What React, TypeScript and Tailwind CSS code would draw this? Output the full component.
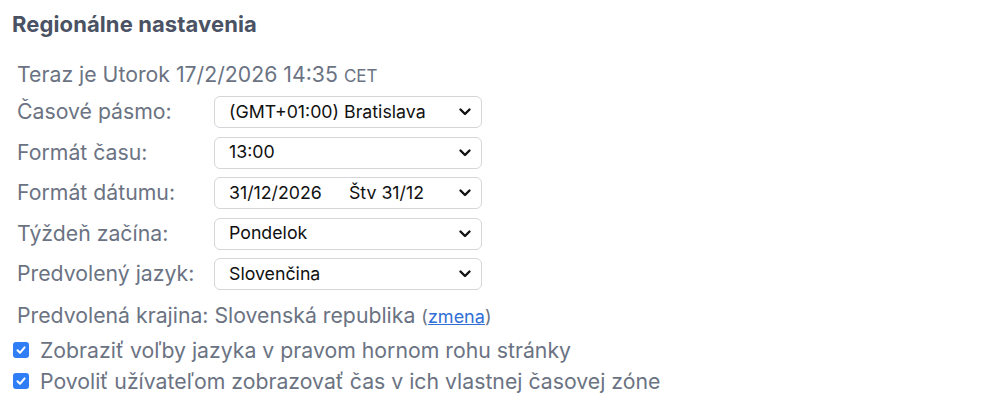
import React from 'react';

const rows = [
  { label: 'Časové pásmo:', value: '(GMT+01:00) Bratislava' },
  { label: 'Formát času:', value: '13:00' },
  { label: 'Formát dátumu:', value: '31/12/2026', extra: 'Štv 31/12' },
  { label: 'Týždeň začína:', value: 'Pondelok' },
  { label: 'Predvolený jazyk:', value: 'Slovenčina' },
];

function Chevron() {
  return (
    <svg className="h-[12px] w-[14px]" viewBox="0 0 14 12" fill="none">
      <path d="M2.5 3.5 7 8l4.5-4.5" stroke="#111" strokeWidth={2.4} strokeLinecap="round" strokeLinejoin="round" />
    </svg>
  );
}

function Check() {
  return (
    <span className="flex h-[16px] w-[16px] shrink-0 items-center justify-center rounded-[3px] bg-[#2f7ef6]">
      <svg className="h-[12px] w-[12px]" viewBox="0 0 12 12" fill="none">
        <path d="M2.5 6.3 5 8.8 9.6 3.4" stroke="white" strokeWidth={2} strokeLinecap="round" strokeLinejoin="round" />
      </svg>
    </span>
  );
}

export default function App() {
  return (
    <div className="h-[420px] w-[984px] bg-white pl-[12px] pt-[11px] font-['Inter',sans-serif] text-[#6b7383]">
      {/* Heading */}
      <h2 className="text-[22px] font-bold leading-[26px] tracking-[0.1px] text-[#4a5264]">Regionálne nastavenia</h2>

      <div className="mt-[25px] pl-[5px]">
        <div className="text-[21.25px] leading-[24px]">
          Teraz je Utorok 17/2/2026 14:35 <span className="text-[17px]">CET</span>
        </div>

        {/* Settings rows */}
        <div className="mt-[8px] flex flex-col gap-[8.5px]">
          {rows.map((r) => (
            <div key={r.label} className="flex h-[32px] items-center">
              <div className="w-[197px] text-[21.25px]">{r.label}</div>
              <div className="flex h-[32px] w-[268px] items-center justify-between rounded-[6px] border border-[#d4d6da] bg-white pl-[14px] pr-[9px] text-[17.75px] text-[#111]">
                <span className="flex gap-[27px]">
                  <span>{r.value}</span>
                  {r.extra && <span>{r.extra}</span>}
                </span>
                <Chevron />
              </div>
            </div>
          ))}
        </div>

        <div className="mt-[13px] text-[21.25px] leading-[24px]">
          Predvolená krajina: Slovenská republika{' '}
          <span className="text-[18px]">
            (<a href="#" className="text-[#2f6fd6] underline">zmena</a>)
          </span>
        </div>
      </div>

      {/* Checkboxes */}
      <div className="mt-[9px] flex flex-col gap-[7px] pl-[1px]">
        <label className="flex items-center gap-[11px] text-[21.25px] leading-[24px]">
          <Check />
          Zobraziť voľby jazyka v pravom hornom rohu stránky
        </label>
        <label className="flex items-center gap-[11px] text-[21.25px] leading-[24px]">
          <Check />
          Povoliť užívateľom zobrazovať čas v ich vlastnej časovej zóne
        </label>
      </div>
    </div>
  );
}
